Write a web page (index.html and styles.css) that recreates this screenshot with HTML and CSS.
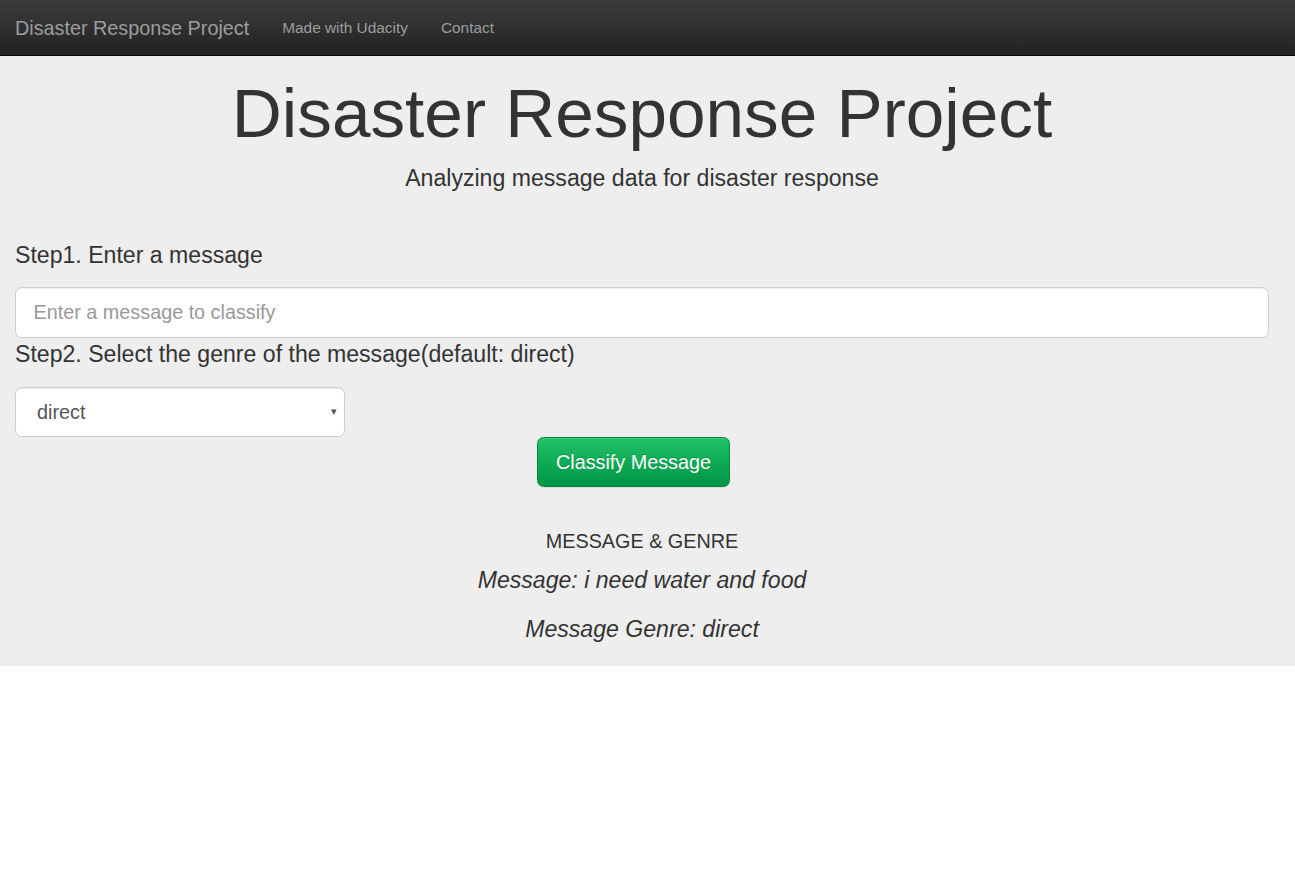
FILE: index.html
```html
<!DOCTYPE html>
<html lang="en">
<head>
<meta charset="utf-8">
<title>Disaster Response Project</title>
<link rel="stylesheet" href="styles.css">
</head>
<body>
<nav class="navbar">
  <a class="brand" href="#">Disaster Response Project</a>
  <ul class="nav">
    <li><a href="#">Made with Udacity</a></li>
    <li><a href="#">Contact</a></li>
  </ul>
</nav>
<div class="jumbotron">
  <h1 class="title">Disaster Response Project</h1>
  <p class="subtitle">Analyzing message data for disaster response</p>
  <form class="form">
    <p class="step step-first">Step1. Enter a message</p>
    <input class="msg-input" type="text" placeholder="Enter a message to classify">
    <p class="step">Step2. Select the genre of the message(default: direct)</p>
    <div class="select-wrap">
      <select class="genre-select">
        <option>direct</option>
        <option>news</option>
        <option>social</option>
      </select>
      <span class="caret">&#9662;</span>
    </div>
    <div class="btn-row">
      <button type="button" class="btn-classify">Classify Message</button>
    </div>
  </form>
  <div class="result">
    <h4 class="result-head">MESSAGE &amp; GENRE</h4>
    <p class="result-line">Message: i need water and food</p>
    <p class="result-line">Message Genre: direct</p>
  </div>
</div>
</body>
</html>
```
FILE: styles.css
```css
* { box-sizing: border-box; }
html, body { margin: 0; padding: 0; background: #fff; }
body {
  font-family: "Liberation Sans", Arial, Helvetica, sans-serif;
  color: #333;
  font-size: 15.4px;
  line-height: 1.42857;
}

.navbar {
  height: 56px;
  display: flex;
  align-items: center;
  background: linear-gradient(to bottom, #3c3c3c 0%, #222 100%);
  border-bottom: 1px solid #080808;
  padding-top: 1px;
}
.brand {
  font-size: 19.8px;
  color: #9d9d9d;
  text-decoration: none;
  padding: 0 16.5px 0 15px;
  line-height: 22px;
}
.nav {
  list-style: none;
  margin: 0;
  padding: 0;
  display: flex;
}
.nav a {
  display: block;
  color: #9d9d9d;
  text-decoration: none;
  font-size: 15.4px;
  padding: 0 16.5px;
  line-height: 22px;
}

.jumbotron {
  background: #eee;
  padding: 19px 26px 20px 15px;
}
.title {
  margin: 0;
  font-size: 69.3px;
  font-weight: 500;
  line-height: 76px;
  text-align: center;
  color: #333;
}
.subtitle {
  margin: 10.5px 0 0;
  font-size: 23.1px;
  line-height: 33px;
  text-align: center;
}
.form {
  margin-top: 44.7px;
}
.step {
  margin: 0 0 16px;
  font-size: 23.1px;
  line-height: 33px;
}
.step-first {
  margin-bottom: 15px;
}
.msg-input {
  display: block;
  width: 100%;
  height: 51px;
  margin: 0;
  padding: 10px 17.6px;
  font-family: inherit;
  font-size: 19.8px;
  color: #555;
  background: #fff;
  border: 1px solid #ccc;
  border-radius: 6.6px;
  box-shadow: inset 0 1px 1px rgba(0,0,0,.075);
  outline: none;
}
.msg-input::placeholder { color: #999; }

.select-wrap {
  position: relative;
  width: 330px;
}
.genre-select {
  display: block;
  width: 330px;
  height: 50px;
  padding: 0 22px 0 21px;
  font-family: inherit;
  font-size: 19.8px;
  color: #555;
  background: #fff;
  border: 1px solid #ccc;
  border-radius: 6.6px;
  box-shadow: inset 0 1px 1px rgba(0,0,0,.075);
  -webkit-appearance: none;
  appearance: none;
  outline: none;
}
.caret {
  position: absolute;
  right: 8px;
  top: 50%;
  transform: translateY(-50%);
  font-size: 11px;
  color: #555;
  pointer-events: none;
}

.btn-row {
  display: flex;
  padding-left: 522px;
}
.btn-classify {
  height: 50px;
  padding: 0 18px;
  font-family: inherit;
  font-size: 19.8px;
  color: #fff;
  background: linear-gradient(to bottom, #1fc266 0%, #009447 100%);
  border: 1px solid #00873f;
  border-radius: 6.6px;
  text-shadow: 0 -1px 0 rgba(0,0,0,.2);
  box-shadow: inset 0 1px 0 rgba(255,255,255,.15), 0 1px 1px rgba(0,0,0,.075);
  cursor: pointer;
}

.result {
  text-align: center;
  margin-top: 44.3px;
}
.result-head {
  margin: 0 0 11px;
  font-size: 19.8px;
  font-weight: 400;
  line-height: 21.8px;
}
.result-line {
  margin: 0 0 16px;
  font-size: 23.1px;
  font-style: italic;
  line-height: 33px;
}
.result-line:last-child { margin-bottom: 0; }
```
